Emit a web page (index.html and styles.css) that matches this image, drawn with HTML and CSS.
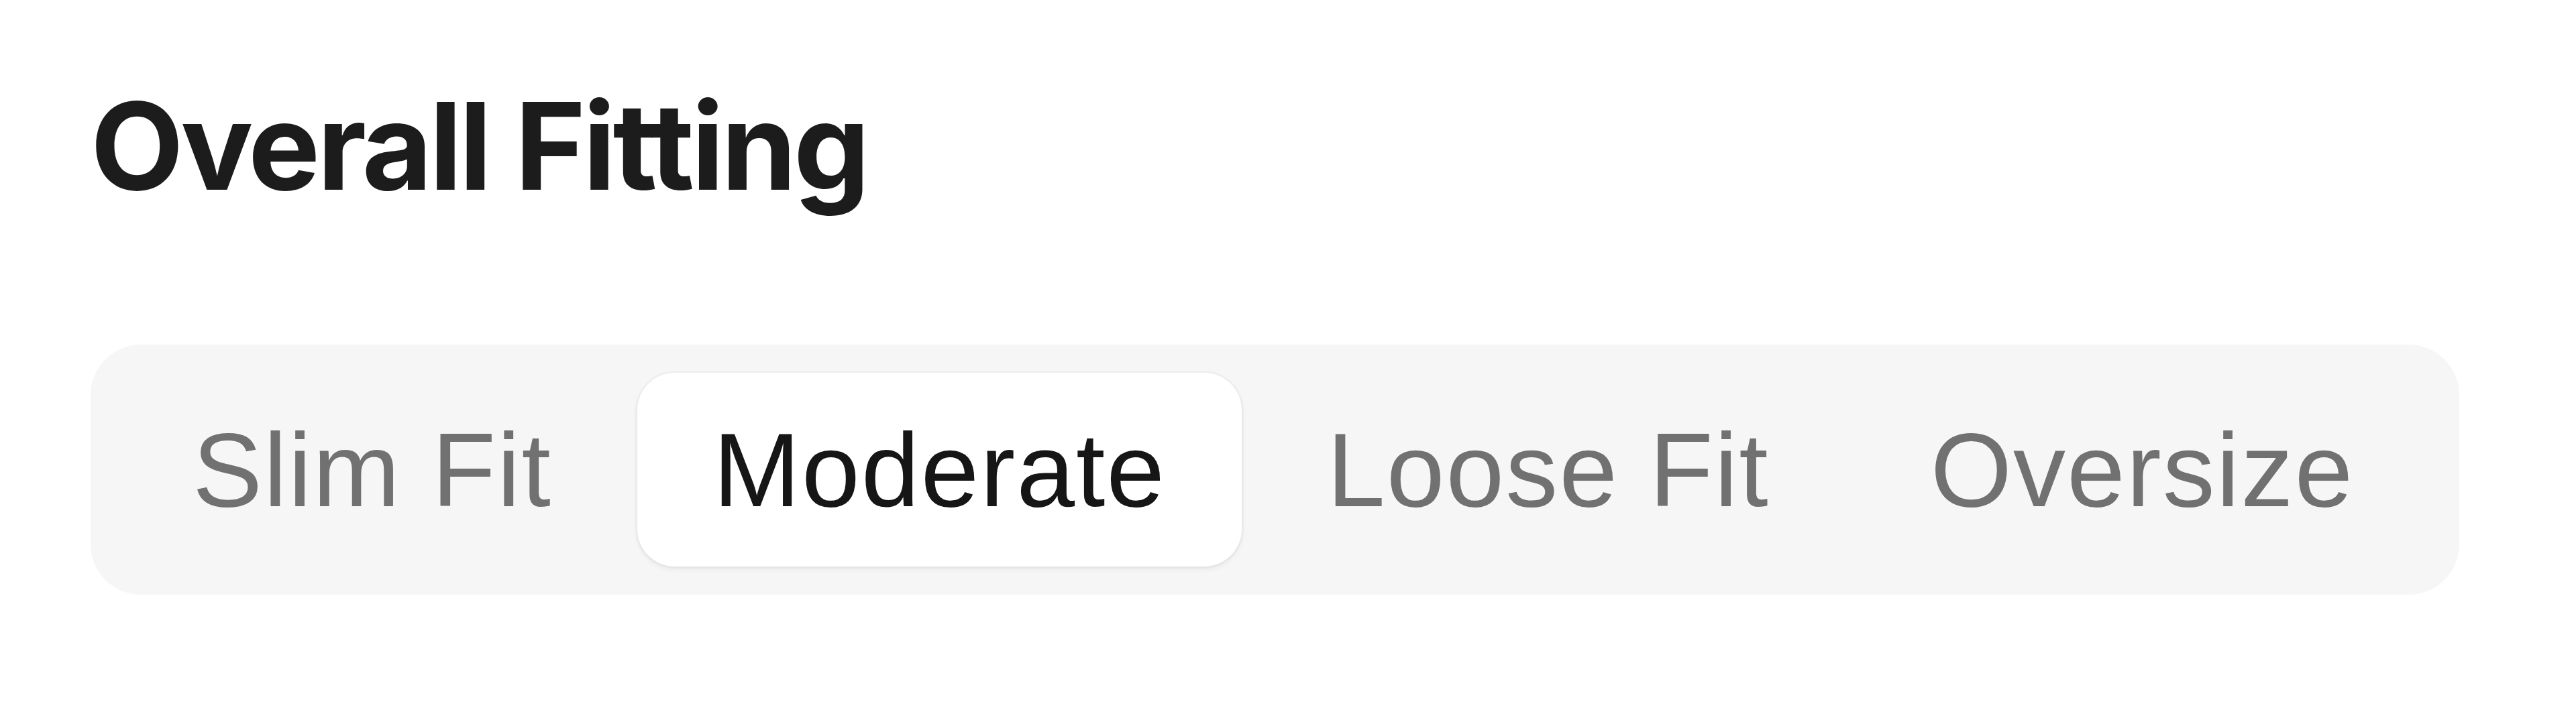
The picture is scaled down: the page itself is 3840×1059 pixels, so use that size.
FILE: index.html
```html
<!DOCTYPE html>
<html lang="en">
<head>
<meta charset="utf-8">
<title>Overall Fitting</title>
<link rel="stylesheet" href="styles.css">
</head>
<body>
<section class="fitting">
  <h2 class="fitting-title">Overall Fitting</h2>
  <div class="segmented" role="tablist">
    <button class="segment" role="tab">Slim Fit</button>
    <button class="segment is-active" role="tab" aria-selected="true">Moderate</button>
    <button class="segment" role="tab">Loose Fit</button>
    <button class="segment" role="tab">Oversize</button>
  </div>
</section>
</body>
</html>
```

FILE: styles.css
```css
html, body {
  margin: 0;
  padding: 0;
  background: #ffffff;
}

.fitting {
  padding: 128px 0 0 135px;
  display: flex;
  flex-direction: column;
  align-items: flex-start;
}

.fitting-title {
  margin: 0;
  font-family: Inter, "Liberation Sans", sans-serif;
  font-weight: 700;
  font-size: 180px;
  line-height: 180px;
  color: #1c1c1c;
  letter-spacing: -4.2px;
}

.segmented {
  margin-top: 206px;
  box-sizing: border-box;
  width: 3531px;
  height: 373px;
  padding: 0 39px;
  display: flex;
  align-items: center;
  gap: 14px;
  background: #f6f6f6;
  border-radius: 75px;
}

.segment {
  appearance: none;
  border: 0;
  background: transparent;
  margin: 0;
  height: 289px;
  padding: 0 113px;
  border-radius: 56px;
  font-family: "Liberation Sans", Arial, sans-serif;
  font-size: 156px;
  letter-spacing: 2px;
  line-height: 1;
  color: #717171;
  cursor: pointer;
  white-space: nowrap;
}

.segment.is-active {
  background: #ffffff;
  color: #161616;
  box-shadow: 0 0 0 3px rgba(0, 0, 0, 0.025), 0 4px 8px rgba(0, 0, 0, 0.06);
}
```
